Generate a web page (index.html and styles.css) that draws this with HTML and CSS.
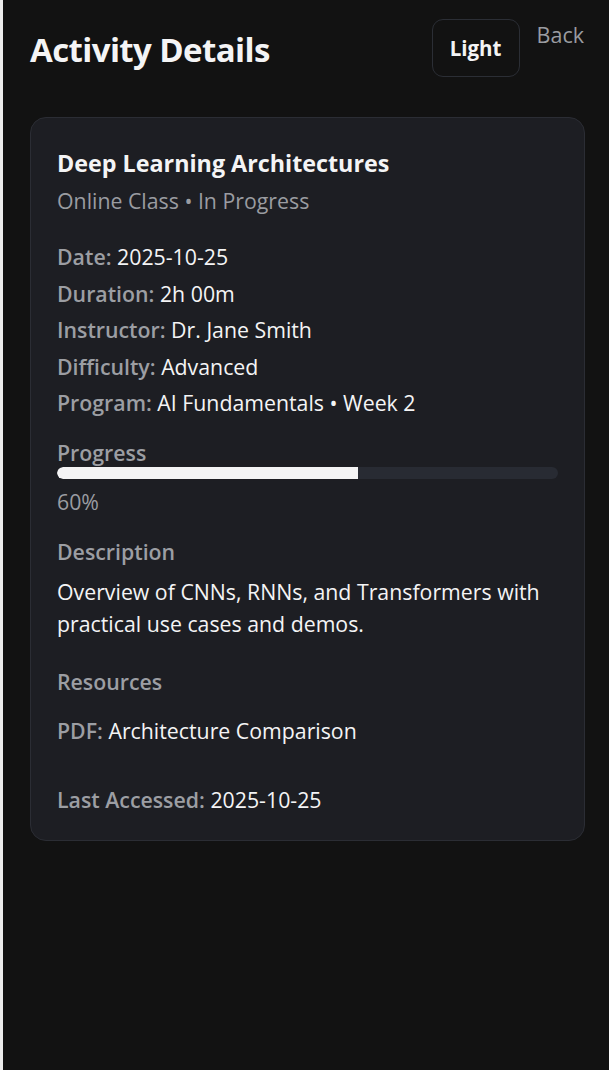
FILE: index.html
```html
<!DOCTYPE html>
<html lang="en">
<head>
<meta charset="utf-8">
<title>Activity Details</title>
<link rel="stylesheet" href="styles.css">
</head>
<body>
<div class="page">
  <header class="top">
    <h1 class="page-title">Activity Details</h1>
    <div class="actions">
      <button class="theme-btn" type="button">Light</button>
      <a class="back-link" href="#">Back</a>
    </div>
  </header>

  <section class="card">
    <h2 class="card-title">Deep Learning Architectures</h2>
    <p class="subtitle">Online Class • In Progress</p>

    <div class="meta">
      <p class="row"><span class="label">Date:</span> 2025-10-25</p>
      <p class="row"><span class="label">Duration:</span> 2h 00m</p>
      <p class="row"><span class="label">Instructor:</span> Dr. Jane Smith</p>
      <p class="row"><span class="label">Difficulty:</span> Advanced</p>
      <p class="row"><span class="label">Program:</span> AI Fundamentals • Week 2</p>
    </div>

    <div class="progress">
      <div class="label block">Progress</div>
      <div class="track"><div class="fill" style="width: 60%"></div></div>
      <div class="percent">60%</div>
    </div>

    <div class="section">
      <div class="label block">Description</div>
      <p class="desc">Overview of CNNs, RNNs, and Transformers with practical use cases and demos.</p>
    </div>

    <div class="section resources">
      <div class="label block">Resources</div>
      <p class="row res"><span class="label">PDF:</span> Architecture Comparison</p>
    </div>

    <p class="row accessed"><span class="label">Last Accessed:</span> 2025-10-25</p>
  </section>
</div>
</body>
</html>
```

FILE: styles.css
```css
html {
  background: #ececec;
}
body {
  margin: 0;
  padding-left: 3px;
  font-family: "Open Sans", "Noto Sans", sans-serif;
  color: #f4f4f5;
}
.page {
  background: #121212;
  min-height: 1070px;
  padding: 19px 24px 40px 27px;
  box-sizing: border-box;
}
.top {
  display: flex;
  justify-content: space-between;
  align-items: flex-start;
}
.page-title {
  margin: 11px 0 0;
  font-size: 33px;
  font-weight: 700;
  line-height: 40px;
  color: #f4f4f5;
  letter-spacing: -0.6px;
}
.actions {
  display: flex;
  align-items: flex-start;
  gap: 17px;
}
.theme-btn {
  width: 88px;
  height: 58px;
  background: #121212;
  border: 1.5px solid #2b2e35;
  border-radius: 11px;
  color: #f4f4f5;
  font-family: inherit;
  font-size: 20.5px;
  font-weight: 700;
  padding: 0;
}
.back-link {
  color: #9a9ca1;
  font-size: 21.5px;
  line-height: 26px;
  text-decoration: none;
  margin-top: 3px;
  margin-right: 1px;
}
.card {
  margin-top: 40px;
  background: #1d1e23;
  border: 1px solid #2b2d34;
  border-radius: 16px;
  padding: 30px 26px 25px;
}
.card-title {
  margin: 0;
  font-size: 23.3px;
  line-height: 30px;
  font-weight: 700;
  color: #f4f4f5;
}
.subtitle {
  margin: 8px 0 0;
  font-size: 21.3px;
  line-height: 30px;
  color: #9a9ca1;
}
.meta {
  margin-top: 26px;
  display: flex;
  flex-direction: column;
  gap: 6.5px;
}
.row {
  margin: 0;
  font-size: 21.3px;
  line-height: 30px;
}
.label {
  color: #9c9ea3;
  font-weight: 600;
  font-size: 21.3px;
}
.block {
  display: block;
}
.progress {
  margin-top: 22px;
}
.progress .label {
  line-height: 26px;
}
.track {
  margin-top: 1px;
  height: 12px;
  background: #282b33;
  border-radius: 6px;
  overflow: hidden;
}
.fill {
  height: 100%;
  background: #f4f4f5;
  border-radius: 6px 0 0 6px;
}
.percent {
  margin-top: 8px;
  font-size: 21.3px;
  line-height: 30px;
  color: #9a9ca1;
}
.section {
  margin-top: 20px;
}
.section .label {
  line-height: 30px;
}
.desc {
  margin: 9px 0 0;
  font-size: 21.3px;
  line-height: 32px;
}
.resources {
  margin-top: 27px;
}
.res {
  margin-top: 19px;
}
.accessed {
  margin-top: 39px;
}
```
